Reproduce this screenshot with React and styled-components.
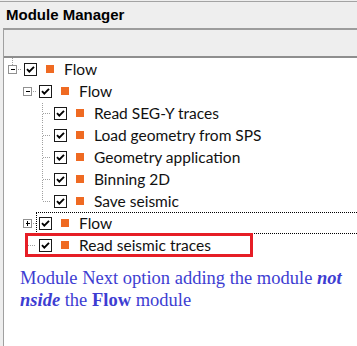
import styled, { createGlobalStyle } from "styled-components";

const GlobalStyle = createGlobalStyle`
  html, body {
    margin: 0;
    padding: 0;
    background: #fff;
  }
`;

const rows = [
  { level: 0, label: "Flow", expander: "minus", up: true },
  { level: 1, label: "Flow", expander: "minus" },
  { level: 2, label: "Read SEG-Y traces", up: true, down: true },
  { level: 2, label: "Load geometry from SPS", up: true, down: true },
  { level: 2, label: "Geometry application", up: true, down: true },
  { level: 2, label: "Binning 2D", up: true, down: true },
  { level: 2, label: "Save seismic", up: true },
  { level: 1, label: "Flow", expander: "plus", focused: true },
  { level: 1, label: "Read seismic traces", highlighted: true },
];

const Window = styled.div`
  min-height: 100vh;
  background: #eeeeee;
  display: flex;
  flex-direction: column;
  padding-top: 1px;
  box-sizing: border-box;
`;

const TitleBar = styled.div`
  border-top: 1px solid #a3a3a3;
  height: 26px;
  padding-left: 6px;
  font-family: "Liberation Sans", Arial, sans-serif;
  font-weight: bold;
  font-size: 15px;
  line-height: 25px;
  color: #000;
`;

const Panel = styled.div`
  flex: 1;
  margin-left: 3px;
  border-top: 2px solid #9c9c9c;
  border-left: 1px solid #a0a0a0;
  background: #fff;
  display: flex;
  flex-direction: column;
`;

const ColumnHeader = styled.div`
  height: 26px;
  background: #eeeeee;
  border-bottom: 2px solid #8e8e8e;
`;

const Tree = styled.div`
  display: flex;
  flex-direction: column;
`;

const Row = styled.div`
  position: relative;
  display: flex;
  align-items: center;
  height: 22px;
  padding-left: ${(p) => p.$level * 15}px;
`;

const Item = styled.div`
  flex: 1;
  display: flex;
  align-items: center;
  height: 22px;
  box-sizing: border-box;
  padding-left: 2px;
  border: 1px dotted ${(p) => (p.$focused ? "#000" : "transparent")};
  border-right: none;
`;

const Square = styled.span`
  width: 8px;
  height: 8px;
  background: #ef6a22;
  margin-left: 9px;
  margin-right: 10px;
  flex-shrink: 0;
`;

const Label = styled.span`
  font-family: Lato, "Liberation Sans", sans-serif;
  font-size: 15.5px;
  color: #111;
  white-space: nowrap;
`;

const Highlight = styled.div`
  position: absolute;
  left: 21px;
  top: -1px;
  width: 228px;
  height: 24px;
  border: 3px solid #e61e26;
  box-sizing: border-box;
  pointer-events: none;
`;

const Note = styled.p`
  margin: 11px 0 0 16px;
  font-family: "Liberation Serif", "Times New Roman", serif;
  font-size: 18.5px;
  line-height: 22px;
  color: #3d3dd2;
  width: 330px;
`;

const Strong = styled.b`
  font-style: ${(p) => (p.$italic ? "italic" : "normal")};
`;

const Connector = ({ expander, up, down }) => {
  const grey = "#a0a0a0";
  const dots = { stroke: grey, strokeDasharray: "1 1", shapeRendering: "crispEdges" };
  return (
    <svg width="17" height="22" viewBox="0 0 17 22" style={{ flexShrink: 0 }}>
      {up && <line x1="8.5" y1={expander ? 0 : 1} x2="8.5" y2={expander ? 7 : 11} {...dots} />}
      {down && <line x1="8.5" y1="12" x2="8.5" y2="22" {...dots} />}
      <line x1={expander ? 14 : 9} y1="11.5" x2="17" y2="11.5" {...dots} />
      {expander && (
        <g shapeRendering="crispEdges">
          <rect x="4.5" y="7.5" width="8" height="8" fill="#fff" stroke="#919191" />
          <line x1="6.5" y1="11.5" x2="11" y2="11.5" stroke="#000" />
          {expander === "plus" && <line x1="8.5" y1="9" x2="8.5" y2="14" stroke="#000" />}
        </g>
      )}
    </svg>
  );
};

const CheckBox = () => (
  <svg width="13" height="13" viewBox="0 0 13 13" style={{ flexShrink: 0 }}>
    <rect x="0.5" y="0.5" width="12" height="12" fill="#fff" stroke="#1a1a1a" shapeRendering="crispEdges" />
    <path d="M3 6.2 L5.3 8.6 L10 3.8" fill="none" stroke="#000" strokeWidth="1.9" />
  </svg>
);

export default function App() {
  return (
    <>
      <GlobalStyle />
      <Window>
        <TitleBar>Module Manager</TitleBar>
        <Panel>
          <ColumnHeader />
          <Tree>
            {rows.map((r, i) => (
              <Row key={i} $level={r.level}>
                <Connector expander={r.expander} up={r.up} down={r.down} />
                <Item $focused={r.focused}>
                  <CheckBox />
                  <Square />
                  <Label>{r.label}</Label>
                </Item>
                {r.highlighted && <Highlight />}
              </Row>
            ))}
          </Tree>
          <Note>
            Module Next option adding the module <Strong $italic>not</Strong>{" "}
            <Strong $italic>nside</Strong> the <Strong>Flow</Strong> module
          </Note>
        </Panel>
      </Window>
    </>
  );
}
